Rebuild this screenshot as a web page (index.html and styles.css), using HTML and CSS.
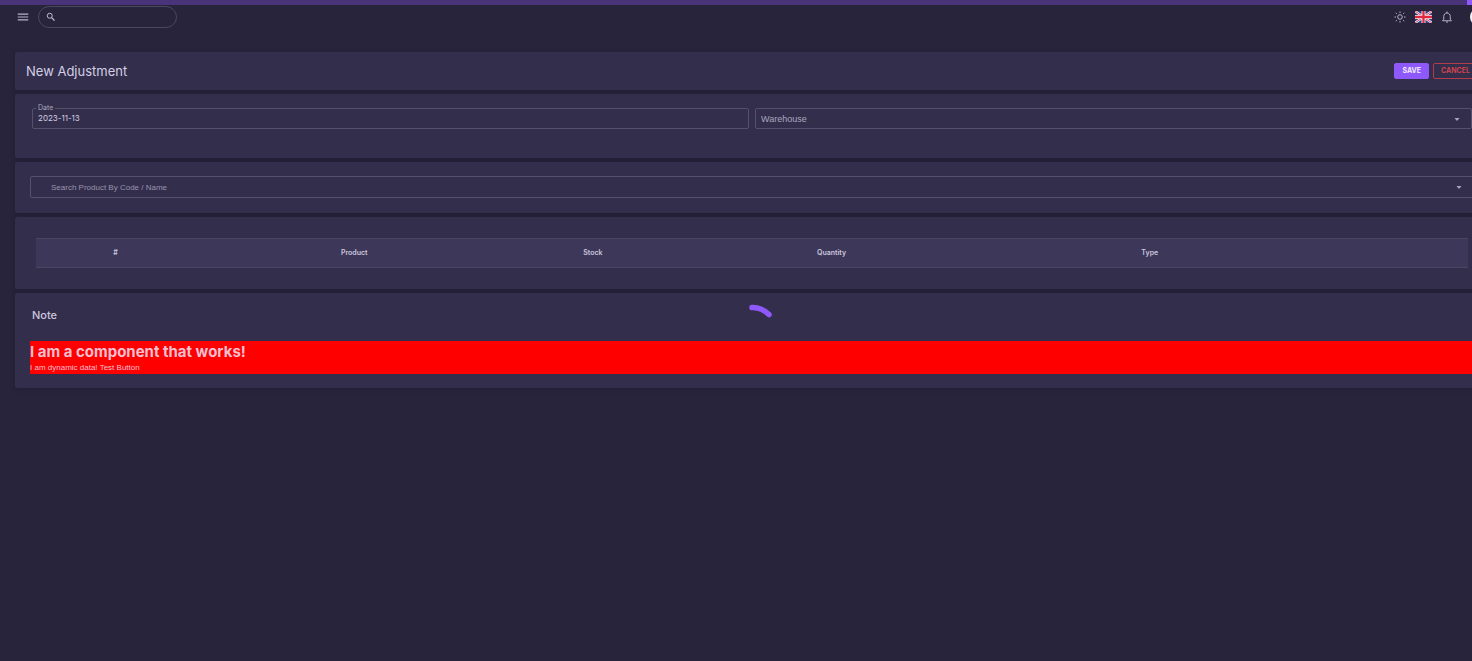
FILE: index.html
```html
<!DOCTYPE html>
<html lang="en">
<head>
<meta charset="utf-8">
<meta name="viewport" content="width=device-width, initial-scale=1">
<title>New Adjustment</title>
<link rel="stylesheet" href="styles.css">
</head>
<body>
<div class="app">
  <div class="loading-bar" role="progressbar" aria-label="Loading page"><span class="loading-chunk"></span></div>
  <header class="topbar">
    <button class="icon-button" type="button" aria-label="Toggle menu">
      <svg width="14" height="14" viewBox="0 0 24 24"><path d="M3 6h18v2H3zM3 11h18v2H3zM3 16h18v2H3z" fill="currentColor"/></svg>
    </button>
    <label class="search">
      <svg width="10" height="10" viewBox="0 0 24 24"><circle cx="9" cy="9" r="6" fill="none" stroke="currentColor" stroke-width="2.200"/><path d="M13.500 13.500l7 7" stroke="currentColor" stroke-width="2.800"/></svg>
      <input class="search-input" type="text" aria-label="Search">
    </label>
    <div class="tools">
      <button class="icon-button" type="button" aria-label="Toggle theme">
        <svg width="12" height="12" viewBox="0 0 24 24" fill="none" stroke="currentColor" stroke-width="2"><circle cx="12" cy="12" r="4.600"/><path d="M12 1v3M12 20v3M1 12h3M20 12h3M3.500 3.500l2.200 2.200M18.300 18.300l2.200 2.200M3.500 20.500l2.200-2.200M18.300 5.700l2.200-2.200"/></svg>
      </button>
      <button class="icon-button" type="button" aria-label="Language: English">
        <svg width="17" height="12" viewBox="0 0 60 42" preserveAspectRatio="none"><path fill="#2f3f80" d="M0 0h60v42H0z"/><path d="M0 0l60 42M60 0L0 42" stroke="#f1eef5" stroke-width="8"/><path d="M0 0l60 42M60 0L0 42" stroke="#e0283f" stroke-width="3"/><path d="M30 0v42M0 21h60" stroke="#f1eef5" stroke-width="14"/><path d="M30 0v42M0 21h60" stroke="#e0283f" stroke-width="8"/></svg>
      </button>
      <button class="icon-button" type="button" aria-label="Notifications">
        <svg width="12" height="12" viewBox="0 0 24 24" fill="none" stroke="currentColor" stroke-width="2"><path d="M3 19.500h18l-2.500-3V11c0-4-2.500-7-6.500-7s-6.500 3-6.500 7v5.500z"/><path d="M12 1v3M10 22h4"/></svg>
      </button>
      <button class="avatar" type="button" aria-label="Account"></button>
    </div>
  </header>
  <main class="content">
    <section class="card title-card">
      <h1 class="page-title">New Adjustment</h1>
      <div class="actions">
        <button class="button button-primary" type="button">SAVE</button>
        <button class="button button-danger" type="button">CANCEL</button>
      </div>
    </section>
    <section class="card details-card">
      <fieldset class="field field-date">
        <legend class="field-label"><label for="date">Date</label></legend>
        <input class="field-control" id="date" type="text" value="2023-11-13">
      </fieldset>
      <div class="field field-select">
        <select class="field-control" aria-label="Warehouse"><option>Warehouse</option></select>
        <svg class="caret" width="6" height="3" viewBox="0 0 6 3"><path d="M.5 0h5L3 3z" fill="currentColor"/></svg>
      </div>
    </section>
    <section class="card product-card">
      <div class="field field-product">
        <input class="field-control" type="text" role="combobox" aria-expanded="false" aria-label="Search product" placeholder="Search Product By Code / Name">
        <svg class="caret" width="6" height="3" viewBox="0 0 6 3"><path d="M.5 0h5L3 3z" fill="currentColor"/></svg>
      </div>
    </section>
    <section class="card table-card">
      <table class="items">
        <colgroup><col><col class="wide"><col><col class="wide"><col class="wide"><col></colgroup>
        <thead><tr><th scope="col">#</th><th scope="col">Product</th><th scope="col">Stock</th><th scope="col">Quantity</th><th scope="col">Type</th><td></td></tr></thead>
      </table>
    </section>
    <section class="card note-card">
      <h2 class="note-title">Note</h2>
      <div class="notice">
        <h3 class="notice-title">I am a component that works!</h3>
        <p class="notice-text">I am dynamic data! Test Button</p>
      </div>
    </section>
  </main>
  <svg class="spinner" width="48" height="48" viewBox="0 0 48 48" role="img" aria-label="Loading"><path d="M6 7.500Q15 7 23 14.500" fill="none" stroke="#8e58fb" stroke-width="5.500" stroke-linecap="round"/></svg>
</div>
</body>
</html>
```
FILE: styles.css
```css
* { box-sizing: border-box; }

body {
  margin: 0;
  min-height: 100vh;
  overflow: hidden;
  background: #28243c;
  color: #cbc7df;
  font-family: Inter, "Liberation Sans", sans-serif;
  font-size: 8px;
}

button, input, select { font: inherit; color: inherit; }
h1, h2, h3, p { margin: 0; }
svg { display: block; }

/* The workspace is slightly wider than the window. */
.app { width: calc(100% + 16px); }

.loading-bar {
  display: flex;
  justify-content: flex-end;
  height: 5px;
  padding-right: 16px;
  background: #4a3479;
}
.loading-chunk { width: 5px; background: #8e58fb; }

.topbar {
  display: flex;
  align-items: center;
  height: 24px;
  padding-left: 16px;
}
.icon-button {
  display: block;
  padding: 0;
  border: 0;
  background: none;
  color: #b5b1ca;
}
.search {
  display: flex;
  align-items: center;
  width: 139px;
  height: 22px;
  margin-left: 8px;
  padding-left: 7px;
  border: 1px solid #4b4661;
  border-radius: 11px;
}
.search-input {
  flex: 1;
  min-width: 0;
  padding: 0 8px;
  border: 0;
  outline: 0;
  background: none;
}
.tools {
  display: flex;
  align-items: center;
  gap: 9px;
  margin-left: auto;
}
.avatar {
  width: 18px;
  height: 18px;
  margin-left: 8px;
  padding: 0;
  border: 0;
  border-radius: 50%;
  background: #f2f1f5;
}

.content {
  display: flex;
  flex-direction: column;
  gap: 4px;
  padding: 23px 0 0 15px;
}
.card {
  padding: 14px 14px 15px 15px;
  border-radius: 2px;
  background: #332e4b;
  box-shadow: 0 1px 4px #211d33;
}

.title-card {
  display: flex;
  align-items: center;
  justify-content: space-between;
  padding: 11px 10px 11px 11px;
}
.page-title { font-size: 13px; line-height: 16px; font-weight: 400; color: #d2cee5; }
.actions { display: flex; gap: 4px; }
.button {
  height: 16px;
  padding: 0 7px;
  border: 1px solid #8e58fb;
  border-radius: 2px;
  font-size: 7px;
  line-height: 14px;
  font-weight: 700;
}
.button-primary { background: #8e58fb; color: #f1ebff; }
.button-danger { border-color: #b03b4d; background: none; color: #cf4250; }

.details-card {
  display: grid;
  grid-template-columns: 1fr 1fr;
  align-items: end;
  gap: 6px;
  padding: 10px 16px 29px 17px;
}
.field {
  position: relative;
  min-width: 0;
  height: 21px;
  margin: 0;
  padding: 0;
  border: 1px solid #56516b;
  border-radius: 2px;
}
.field-control {
  display: block;
  width: 100%;
  height: 100%;
  padding: 0 6px;
  border: 0;
  outline: 0;
  background: none;
  appearance: none;
}
.field-date { height: 25px; }
.field-date .field-control { height: 12px; padding: 0 5px; color: #d2cee5; }
.field-label {
  margin-left: 3px;
  padding: 0 2px;
  font-size: 7px;
  line-height: 8px;
  color: #aaa6bf;
}
.field-select .field-control,
.product-card .field-control,
.notice-text { font-family: "Liberation Sans", sans-serif; }
.field-select .field-control { padding: 0 5px; font-size: 9px; color: #aaa6bf; }
.caret {
  position: absolute;
  top: 50%;
  right: 11px;
  margin-top: -1px;
  color: #aaa6bf;
  pointer-events: none;
}
.product-card .field { height: 22px; }
.product-card .field-control { padding: 0 20px; }
.field-control::placeholder { color: #9994ae; opacity: 1; }

.table-card { padding: 21px 20px 21px 21px; }
.items {
  width: 100%;
  table-layout: fixed;
  border-collapse: collapse;
  background: #3d3759;
  border: solid #4a4562;
  border-width: 1px 0;
}
.items .wide { width: 22.22%; }
.items th, .items td { height: 29px; padding: 0; }
.items th { font-size: 7px; line-height: 8px; font-weight: 600; color: #cbc7df; }

.note-card { padding-bottom: 14px; }
.note-title {
  padding-left: 2px;
  font-size: 11px;
  line-height: 16px;
  font-weight: 500;
}
.notice {
  margin-top: 18px;
  background: #ff0000;
  color: #f4bfd0;
}
.notice-title { font-size: 15px; line-height: 21px; font-weight: 700; }
.notice-text { line-height: 12px; }

/* Floats over the page while data loads. */
.spinner {
  position: fixed;
  top: 300px;
  left: calc(50% + 10px);
}
```
